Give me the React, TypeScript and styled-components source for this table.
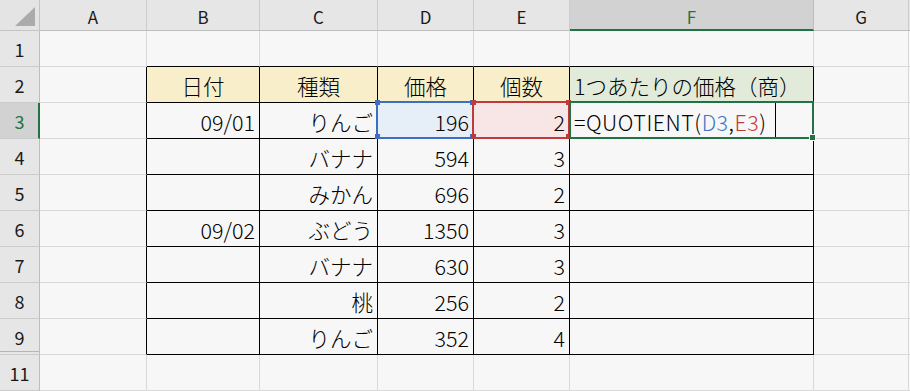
import styled, { createGlobalStyle, css } from 'styled-components';

const GlobalStyle = createGlobalStyle`
  html, body {
    margin: 0;
    padding: 0;
    background: #f7f7f7;
  }
  body {
    font-family: "Noto Sans CJK JP", "Noto Sans", sans-serif;
  }
`;

const GREEN = '#217346';
const GRID = '#d9d9d9';
const INK = '#000000';

const columns = ['A', 'B', 'C', 'D', 'E', 'F', 'G'];
const widths = [107, 113, 118, 96, 96, 244, 95];

type Align = 'left' | 'center' | 'right';
type Fill = 'yellow' | 'green' | 'blue' | 'pink';

interface CellData {
  text?: string;
  align?: Align;
  fill?: Fill;
}

const fills: Record<Fill, string> = {
  yellow: '#f8efca',
  green: '#e2ebd9',
  blue: '#e6eef8',
  pink: '#f8e5e5',
};

// rows of the table B..F, keyed by sheet row number
const table: Record<number, CellData[]> = {
  2: [
    { text: '日付', align: 'center', fill: 'yellow' },
    { text: '種類', align: 'center', fill: 'yellow' },
    { text: '価格', align: 'center', fill: 'yellow' },
    { text: '個数', align: 'center', fill: 'yellow' },
    { text: '1つあたりの価格（商）', align: 'left', fill: 'green' },
  ],
  3: [{ text: '09/01' }, { text: 'りんご' }, { text: '196', fill: 'blue' }, { text: '2', fill: 'pink' }, {}],
  4: [{}, { text: 'バナナ' }, { text: '594' }, { text: '3' }, {}],
  5: [{}, { text: 'みかん' }, { text: '696' }, { text: '2' }, {}],
  6: [{ text: '09/02' }, { text: 'ぶどう' }, { text: '1350' }, { text: '3' }, {}],
  7: [{}, { text: 'バナナ' }, { text: '630' }, { text: '3' }, {}],
  8: [{}, { text: '桃' }, { text: '256' }, { text: '2' }, {}],
  9: [{}, { text: 'りんご' }, { text: '352' }, { text: '4' }, {}],
};

const rows = [1, 2, 3, 4, 5, 6, 7, 8, 9, 11];

const App = () => {
  const inTable = (r: number) => r >= 2 && r <= 9;

  return (
    <>
      <GlobalStyle />
      <Sheet $widths={widths}>
        <Corner>
          <svg width="40" height="31" viewBox="0 0 40 31">
            <polygon points="35,7 35,26 15,26" fill="#ababab" />
          </svg>
        </Corner>
        {columns.map((c) => (
          <ColHead key={c} $active={c === 'F'}>{c}</ColHead>
        ))}
        <ColHead />

        {rows.map((r) => (
          <Row key={r}>
            <RowHead $active={r === 3} $gapBelow={r === 9}>{r}</RowHead>
            {columns.map((c, ci) => {
              const tIndex = ci - 1;
              const isTable = inTable(r) && tIndex >= 0 && tIndex <= 4;
              const data: CellData = isTable ? table[r][tIndex] : {};
              const rightBlack = inTable(r) && ci >= 0 && ci <= 5;
              const bottomBlack = r >= 1 && r <= 9 && ci >= 1 && ci <= 5;
              const key = `${c}${r}`;

              if (key === 'F3') {
                return (
                  <Cell key={key} $right={INK} $bottom={INK} $align="left">
                    <Formula>
                      =QUOTIENT(<Ref $color="#3c74c8">D3</Ref>,<Ref $color="#c0393b">E3</Ref>)
                    </Formula>
                    <Caret />
                    <ActiveBox>
                      <FillHandle />
                    </ActiveBox>
                  </Cell>
                );
              }

              return (
                <Cell
                  key={key}
                  $right={rightBlack ? INK : GRID}
                  $bottom={bottomBlack ? INK : GRID}
                  $align={data.align ?? 'right'}
                  $fill={data.fill}
                >
                  {data.text}
                  {key === 'D3' && <RangeBox $color="#3c6ec4" />}
                  {key === 'E3' && <RangeBox $color="#c0393b" />}
                </Cell>
              );
            })}
            <Cell $right={GRID} $bottom={GRID} $align="left" />
          </Row>
        ))}
      </Sheet>
    </>
  );
};

export default App;

const Sheet = styled.div<{ $widths: number[] }>`
  display: grid;
  grid-template-columns: 40px ${(p) => p.$widths.map((w) => `${w}px`).join(' ')} 1fr;
  grid-template-rows: 31px;
  grid-auto-rows: 36px;
  width: 910px;
  height: 391px;
  overflow: hidden;
  background: #f7f7f7;
`;

const Row = styled.div`
  display: contents;
`;

const Corner = styled.div`
  background: #e4e4e4;
  border-right: 1px solid #c4c4c4;
  border-bottom: 1px solid #c4c4c4;
  box-sizing: border-box;
  svg {
    display: block;
  }
`;

const ColHead = styled.div<{ $active?: boolean }>`
  box-sizing: border-box;
  display: flex;
  align-items: center;
  justify-content: center;
  font-size: 17px;
  color: #1a1a1a;
  background: #e6e6e6;
  border-right: 1px solid #cbcbcb;
  border-bottom: 1px solid #bdbdbd;
  padding-top: 2px;

  ${(p) =>
    p.$active &&
    css`
      background: #d2d2d2;
      color: ${GREEN};
      border-right-color: #bdbdbd;
      border-bottom: 2px solid ${GREEN};
      padding-top: 3px;
    `}
`;

const RowHead = styled.div<{ $active?: boolean; $gapBelow?: boolean }>`
  box-sizing: border-box;
  display: flex;
  align-items: center;
  justify-content: center;
  font-size: 18px;
  color: #1a1a1a;
  background: #e6e6e6;
  border-right: 1px solid #bdbdbd;
  border-bottom: 1px solid #cbcbcb;

  ${(p) =>
    p.$active &&
    css`
      background: #d2d2d2;
      color: ${GREEN};
      border-right: 2px solid ${GREEN};
      padding-left: 1px;
    `}

  ${(p) =>
    p.$gapBelow &&
    css`
      box-shadow: inset 0 -2px 0 #e6e6e6, inset 0 -3px 0 #b5b5b5;
    `}
`;

const justify: Record<Align, string> = {
  left: 'flex-start',
  center: 'center',
  right: 'flex-end',
};

const Cell = styled.div<{ $right: string; $bottom: string; $align: Align; $fill?: Fill }>`
  position: relative;
  box-sizing: border-box;
  display: flex;
  align-items: center;
  justify-content: ${(p) => justify[p.$align]};
  padding: 1px 4px 0 4px;
  font-size: 21.5px;
  font-weight: 300;
  color: #000;
  white-space: nowrap;
  background: ${(p) => (p.$fill ? fills[p.$fill] : '#f7f7f7')};
  border-right: 1px solid ${(p) => p.$right};
  border-bottom: 1px solid ${(p) => p.$bottom};
`;

const Formula = styled.span`
  letter-spacing: 0.5px;
`;

const Ref = styled.span<{ $color: string }>`
  color: ${(p) => p.$color};
`;

const Caret = styled.span`
  align-self: stretch;
  width: 1px;
  margin: -2px 0 -1px 8px;
  background: #000;
`;

const RangeBox = styled.div<{ $color: string }>`
  position: absolute;
  top: -2px;
  left: -2px;
  right: -1px;
  bottom: -1px;
  border: 2px solid ${(p) => p.$color};
  z-index: 2;
  pointer-events: none;

  &::before,
  &::after {
    content: '';
    position: absolute;
    width: 5px;
    height: 5px;
    background: ${(p) => p.$color};
    top: -3px;
    box-shadow: 0 34px 0 ${(p) => p.$color};
  }
  &::before {
    left: -3px;
  }
  &::after {
    right: -3px;
  }
`;

const ActiveBox = styled.div`
  position: absolute;
  top: -2px;
  left: -1px;
  right: -1px;
  bottom: -1px;
  border: 2px solid ${GREEN};
  z-index: 3;
  pointer-events: none;
`;

const FillHandle = styled.div`
  position: absolute;
  right: -4px;
  bottom: -4px;
  width: 5px;
  height: 5px;
  background: ${GREEN};
  border: 1px solid #f7f7f7;
`;
